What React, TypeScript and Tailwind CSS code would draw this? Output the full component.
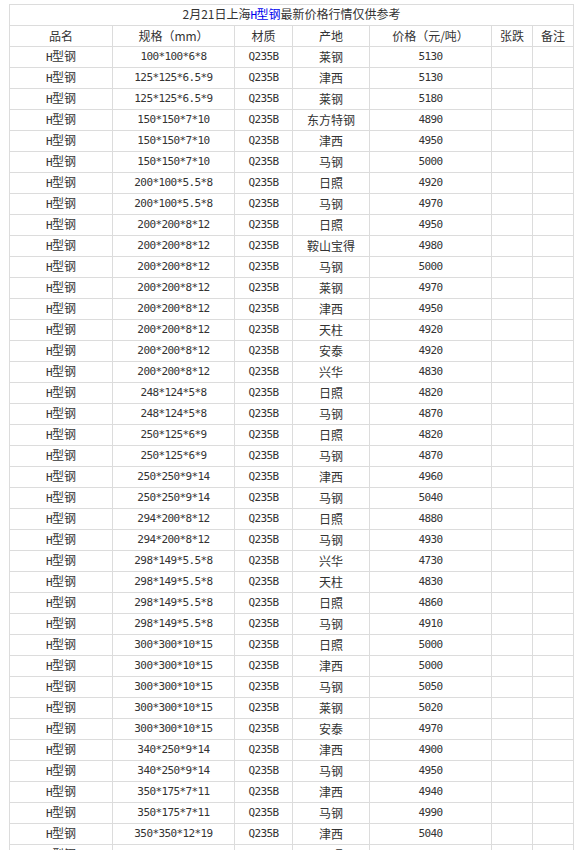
import React from 'react';

type Row = [string, string, string, number];

const rows: Row[] = [
  ['100*100*6*8', 'Q235B', '莱钢', 5130],
  ['125*125*6.5*9', 'Q235B', '津西', 5130],
  ['125*125*6.5*9', 'Q235B', '莱钢', 5180],
  ['150*150*7*10', 'Q235B', '东方特钢', 4890],
  ['150*150*7*10', 'Q235B', '津西', 4950],
  ['150*150*7*10', 'Q235B', '马钢', 5000],
  ['200*100*5.5*8', 'Q235B', '日照', 4920],
  ['200*100*5.5*8', 'Q235B', '马钢', 4970],
  ['200*200*8*12', 'Q235B', '日照', 4950],
  ['200*200*8*12', 'Q235B', '鞍山宝得', 4980],
  ['200*200*8*12', 'Q235B', '马钢', 5000],
  ['200*200*8*12', 'Q235B', '莱钢', 4970],
  ['200*200*8*12', 'Q235B', '津西', 4950],
  ['200*200*8*12', 'Q235B', '天柱', 4920],
  ['200*200*8*12', 'Q235B', '安泰', 4920],
  ['200*200*8*12', 'Q235B', '兴华', 4830],
  ['248*124*5*8', 'Q235B', '日照', 4820],
  ['248*124*5*8', 'Q235B', '马钢', 4870],
  ['250*125*6*9', 'Q235B', '日照', 4820],
  ['250*125*6*9', 'Q235B', '马钢', 4870],
  ['250*250*9*14', 'Q235B', '津西', 4960],
  ['250*250*9*14', 'Q235B', '马钢', 5040],
  ['294*200*8*12', 'Q235B', '日照', 4880],
  ['294*200*8*12', 'Q235B', '马钢', 4930],
  ['298*149*5.5*8', 'Q235B', '兴华', 4730],
  ['298*149*5.5*8', 'Q235B', '天柱', 4830],
  ['298*149*5.5*8', 'Q235B', '日照', 4860],
  ['298*149*5.5*8', 'Q235B', '马钢', 4910],
  ['300*300*10*15', 'Q235B', '日照', 5000],
  ['300*300*10*15', 'Q235B', '津西', 5000],
  ['300*300*10*15', 'Q235B', '马钢', 5050],
  ['300*300*10*15', 'Q235B', '莱钢', 5020],
  ['300*300*10*15', 'Q235B', '安泰', 4970],
  ['340*250*9*14', 'Q235B', '津西', 4900],
  ['340*250*9*14', 'Q235B', '马钢', 4950],
  ['350*175*7*11', 'Q235B', '津西', 4940],
  ['350*175*7*11', 'Q235B', '马钢', 4990],
  ['350*350*12*19', 'Q235B', '津西', 5040],
  ['350*350*12*19', 'Q235B', '日照', 5090],
];

// 数字用等宽字体模拟宋体半角宽度
const num = "font-['DejaVu_Sans_Mono',monospace] text-[11px] tracking-[-0.6px]";
const cell = 'bg-white h-[20px] flex items-center justify-center leading-[20px] whitespace-nowrap overflow-hidden';

function Pinming() {
  return (
    <span>
      <span className={num}>H</span>型钢
    </span>
  );
}

export default function App() {
  return (
    <div className="bg-white min-h-screen pt-[4px] pl-[9px] text-[12px] text-[#333] font-['Noto_Sans_CJK_SC','Noto_Sans',sans-serif]">
      <div className="w-[565px] bg-[#dcdcdc] p-px grid grid-cols-[102px_121px_57px_76px_121px_40px_40px] gap-px">
        <div className={`${cell} col-span-7`}>
          <span>
            2月21日上海
            <span className="text-[#0000ee]">
              <span className={num}>H</span>型钢
            </span>
            最新价格行情仅供参考
          </span>
        </div>

        <div className={cell}>品名</div>
        <div className={cell}>规格（mm）</div>
        <div className={cell}>材质</div>
        <div className={cell}>产地</div>
        <div className={cell}>价格（元/吨）</div>
        <div className={cell}>张跌</div>
        <div className={cell}>备注</div>

        {rows.map((r, i) => (
          <React.Fragment key={i}>
            <div className={cell}>
              <Pinming />
            </div>
            <div className={cell}>
              <span className={num}>{r[0]}</span>
            </div>
            <div className={cell}>
              <span className={num}>{r[1]}</span>
            </div>
            <div className={cell}>{r[2]}</div>
            <div className={cell}>
              <span className={num}>{r[3]}</span>
            </div>
            <div className={cell}></div>
            <div className={cell}></div>
          </React.Fragment>
        ))}
      </div>
    </div>
  );
}
